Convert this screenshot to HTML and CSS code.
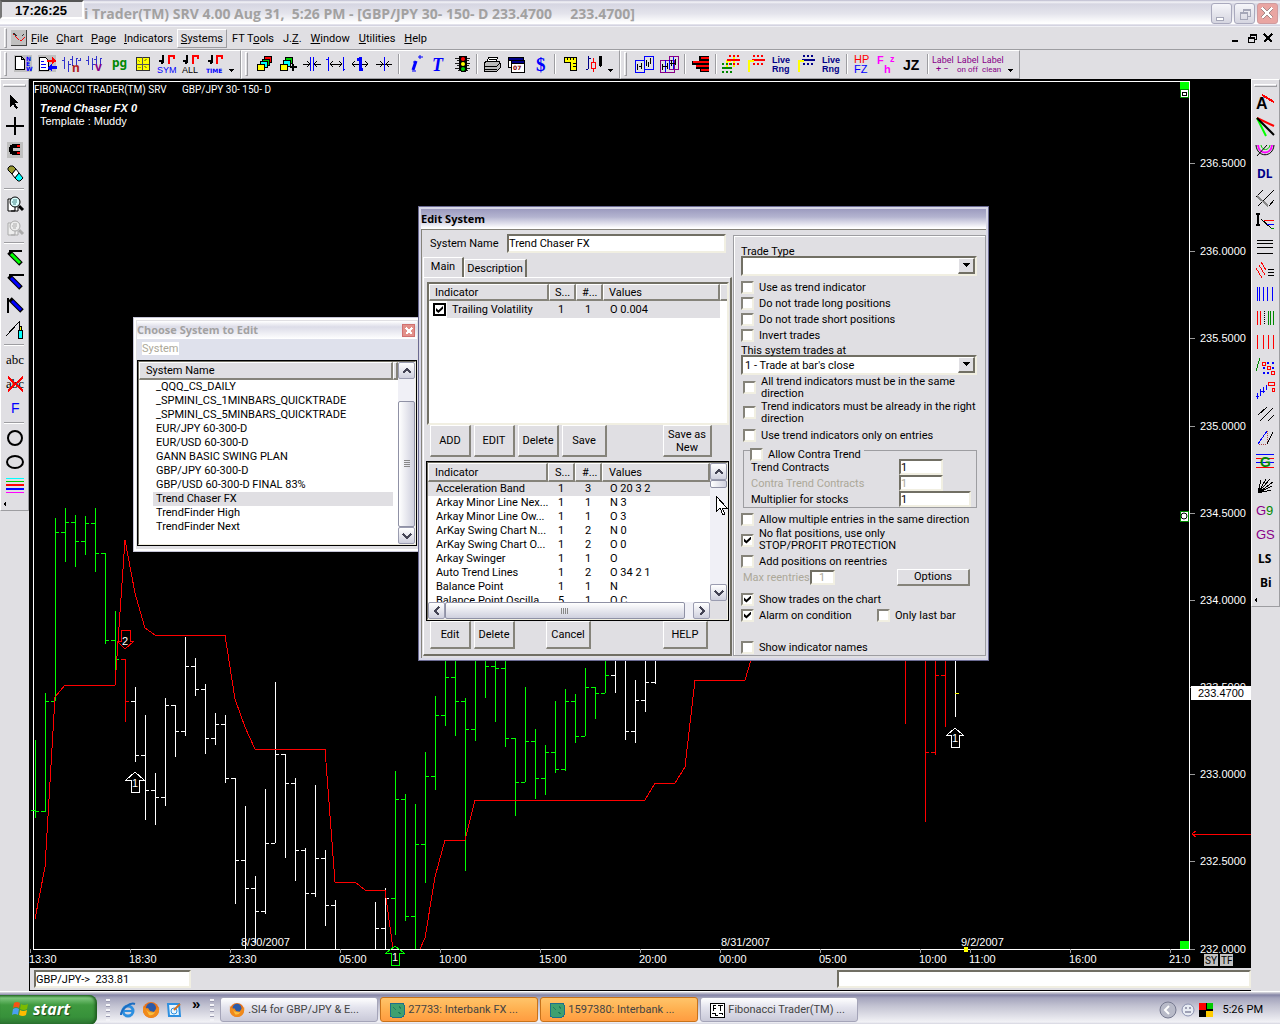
FILE: index.html
```html
<!DOCTYPE html>
<html lang="en">
<head>
<meta charset="utf-8">
<title>Fibonacci Trader(TM) SRV 4.00</title>
<link rel="stylesheet" href="styles.css">
</head>
<body>
<header class="titlebar">
  <h1 class="titlebar-text">i Trader(TM) SRV 4.00 Aug 31,  5:26 PM - [GBP/JPY 30- 150- D 233.4700     233.4700]</h1>
  <div class="clock">17:26:25</div>
  <div class="win-buttons">
    <button class="win-btn" aria-label="Minimize"><svg width="19" height="19"><path d="M4 13h7v3H4z" fill="#fff" stroke="#a5a7b8"/></svg></button>
    <button class="win-btn" aria-label="Restore"><svg width="19" height="19" fill="none" stroke="#a5a7b8"><path d="M8 8V5h7v7h-3M5 8h7v7H5zM5 9h7M8 6h7"/></svg></button>
    <button class="win-btn win-close" aria-label="Close"><svg width="19" height="19"><path d="M4 4l10 10M14 4L4 14" stroke="#a58a8a" stroke-width="4"/><path d="M4 4l10 10M14 4L4 14" stroke="#fff" stroke-width="2"/></svg></button>
  </div>
</header>

<nav class="menubar">
  <i class="grip"></i>
  <svg class="doc-icon" width="16" height="16"><path fill="#c0c0c0" d="M0 0h16v16H0z"/><path d="M0 15h15V0" fill="none" stroke="#444"/><path d="M2 4l3 3 3 3h3l3-3" fill="none" stroke="#f00" stroke-dasharray="2 1"/><path d="M2 3l4 3M11 6l2-2" stroke="#333"/></svg>
  <a href="#"><u>F</u>ile</a><a href="#"><u>C</u>hart</a><a href="#"><u>P</u>age</a><a href="#"><u>I</u>ndicators</a><a href="#" class="active"><u>S</u>ystems</a><a href="#">FT T<u>o</u>ols</a><a href="#">J.<u>Z</u>.</a><a href="#"><u>W</u>indow</a><a href="#"><u>U</u>tilities</a><a href="#"><u>H</u>elp</a>
  <div class="mdi-buttons">
    <button aria-label="Minimize chart"><svg width="10" height="10"><path d="M1 8h6" stroke="#000" stroke-width="2"/></svg></button>
    <button aria-label="Restore chart"><svg width="10" height="10" fill="none" stroke="#000"><path d="M3 4V1h6v5H7M1 4h6v5H1zM1 5h6M3 2h6"/></svg></button>
    <button aria-label="Close chart"><svg width="10" height="10"><path d="M1 1l8 8M9 1L1 9" stroke="#000" stroke-width="2"/></svg></button>
  </div>
</nav>

<div class="toolbars">
  <div class="toolbar">
    <i class="grip"></i>
    <button class="tool" aria-label="New"><svg width="24" height="24"><path fill="#c0c0c0" d="M3 3h18v17H3z"/><path d="M4 4h6l3 3v10H4zM10 4v3h3" fill="#fff" stroke="#000"/><g class="t6" fill="#00f"><text x="15" y="9">N</text><text x="15" y="14">E</text><text x="15" y="19">W</text></g></svg></button>
    <button class="tool" aria-label="Swap"><svg width="24" height="24"><path fill="#c0c0c0" d="M3 3h18v17H3z"/><path d="M4 5h6l3 3v10H4z" fill="#fff" stroke="#000"/><path d="M6 9h3M6 12h5M6 15h5" stroke="#00f"/><path d="M12 8h5V5l5 4-5 3v-2h-5z" fill="#f00"/><path d="M22 14h-5v-2l-5 4 5 3v-2h5z" fill="#00f"/></svg></button>
    <button class="tool" aria-label="Bars n"><svg width="24" height="24"><path d="M5 5v12M3 8h2M9 9v11M9 12h3M13 4v10M11 7h2M17 6v7M17 6h2M21 6v3M19 8h2" stroke="#33c" fill="none"/><text class="t12" x="13" y="20" fill="#b02020">n</text></svg></button>
    <button class="tool" aria-label="Bars v"><svg width="24" height="24"><path d="M5 4v9M3 8h2M9 6v12M9 12h3M13 4v10M11 7h2M17 6v7M17 6h2" stroke="#33c" fill="none"/><text class="t12" x="12" y="19" fill="#808">v</text></svg></button>
    <button class="tool" aria-label="Page"><svg width="24" height="24"><text class="t12" x="5" y="15" fill="#080">pg</text></svg></button>
    <button class="tool" aria-label="Grid"><svg width="24" height="24"><path d="M5 5h13v13H5z" fill="#ff0" stroke="#333"/><path d="M11 5v13M5 12h13" stroke="#555"/><path d="M7 8l2 2M13 9l3-2M7 15l3 1M13 14l3 2" stroke="#aa0"/></svg></button>
    <button class="tool" aria-label="Symbol"><svg width="24" height="24"><path d="M8 3v8M4 9h4M6 11h2" stroke="#000" stroke-width="2"/><path d="M14 12V4h5v3" stroke="#f00" stroke-width="2" fill="none"/><text class="t9" x="2" y="21" fill="#00f">SYM</text></svg></button>
    <button class="tool" aria-label="All"><svg width="24" height="24"><path d="M8 3v8M4 9h4M6 11h2" stroke="#000" stroke-width="2"/><path d="M14 12V4h5v3" stroke="#f00" stroke-width="2" fill="none"/><text class="t9" x="3" y="21">ALL</text></svg></button>
    <button class="tool" aria-label="Time"><svg width="24" height="24"><path d="M9 3v8M5 9h4M7 11h2" stroke="#000" stroke-width="2"/><path d="M14 12V4h5v3" stroke="#f00" stroke-width="2" fill="none"/><text class="t6" x="3" y="21" fill="#00f">TIME</text></svg></button>
    <button class="more" aria-label="More"><svg width="8" height="24"><path d="M1 17h6l-3 3z"/></svg></button>
  </div>
  <div class="toolbar">
    <i class="grip"></i>
    <button class="tool" aria-label="Cascade"><svg width="24" height="24" stroke="#000"><path fill="#f00" d="M12 4h7v6h-7z"/><path fill="#0c0" d="M10 7h7v6h-7z"/><path fill="#0ff" d="M8 9h7v6H8z"/><path fill="#ff0" d="M5 12h7v6H5z"/></svg></button>
    <button class="tool" aria-label="Add page"><svg width="24" height="24" stroke="#000"><path fill="#0c0" d="M9 5h7v6H9z"/><path fill="#0ff" d="M7 8h7v6H7z"/><path fill="#ff0" d="M4 12h7v6H4z"/><path d="M14 15h7M17 12v7" stroke-width="2"/></svg></button>
    <button class="tool" aria-label="Squeeze bars"><svg width="24" height="24" fill="none" stroke="#000"><path d="M3 12h7M7 9l3 3-3 3M21 12h-7M17 9l-3 3 3 3"/><path d="M10 5v14M13 5v14" stroke="#00f"/></svg></button>
    <button class="tool" aria-label="Widen bars"><svg width="24" height="24" fill="none" stroke="#000"><path d="M6 12h12M9 9l-3 3 3 3M15 9l3 3-3 3"/><path d="M4 5v14M2 7h2M19 5v14M19 17h2" stroke="#00f"/></svg></button>
    <button class="tool" aria-label="Widen spacing"><svg width="24" height="24" fill="none" stroke="#000"><path d="M4 12h16M7 9l-3 3 3 3M17 9l3 3-3 3"/><path d="M12 5v14M9 7h3M12 17h3" stroke="#00f" stroke-width="3"/></svg></button>
    <button class="tool" aria-label="Narrow spacing"><svg width="24" height="24" fill="none" stroke="#000"><path d="M4 12h16M8 9l3 3-3 3M17 9l-3 3 3 3"/><path d="M12 5v14" stroke="#00f"/></svg></button>
    <i class="sep"></i>
    <button class="tool" aria-label="Info"><svg class="smooth" width="24" height="24"><path d="M16 5h5M18 3v4" stroke="#00f"/><path d="M14 9l-3 9" fill="none" stroke="#00f" stroke-width="3"/><path d="M11 10h3M10 19h4" stroke="#00f"/></svg></button>
    <button class="tool" aria-label="Text"><svg width="24" height="24"><text class="serif-i" x="6" y="19" fill="#00f">T</text></svg></button>
    <button class="tool" aria-label="Traffic light"><svg width="24" height="24"><path d="M5 6h15M7 8h12M5 11h15M7 13h12M5 16h15M8 18h10" stroke="#222"/><path d="M9 4h8v14l-2 2h-4l-2-2z"/><g class="smooth"><circle cx="13" cy="7" r="2" fill="#f00"/><circle cx="13" cy="12" r="2" fill="#ff0"/><circle cx="13" cy="17" r="2" fill="#0c0"/></g></svg></button>
    <i class="sep"></i>
    <button class="tool" aria-label="Print"><svg width="24" height="24" stroke="#000"><path fill="#fff" d="M9 5h9l-3 6H6z"/><path fill="#bbb" d="M4 11l3-2h12l1 2v5l-3 3H4z"/><path d="M4 14h13l3-3M4 17h13M9 7h7M8 9h7" fill="none"/></svg></button>
    <button class="tool" aria-label="Calendar"><svg width="24" height="24" stroke="#000"><path fill="#fff" d="M4 6h15v9H4z"/><path fill="#008" d="M4 5h15v3H4z"/><path fill="#fff" d="M7 9h13v11H7z"/><path fill="#008" d="M7 8h13v3H7z"/><text class="t6" stroke="none" x="9" y="18" fill="#800">07</text></svg></button>
    <button class="tool" aria-label="Dollar"><svg width="24" height="24"><text class="dollar" x="8" y="19" fill="#00f">$</text></svg></button>
    <i class="sep"></i>
    <button class="tool" aria-label="Ruler"><svg width="24" height="24"><path d="M6 5h12v13h-6v-8H6z" fill="#ff0" stroke="#000"/><path d="M9 5v3M12 5v3M15 5v3M15 11h3M15 14h3" stroke="#000"/></svg></button>
    <button class="tool" aria-label="Candles"><svg width="24" height="24" fill="none"><path d="M6 4v13M4 17h2M6 6h3" stroke="#008"/><path d="M11 6v4M11 16v4M9 10h4v6H9z" stroke="#f00"/><path d="M17 4h3v9l-2 2-1-2z" fill="#000"/></svg></button>
    <button class="more" aria-label="More"><svg width="8" height="24"><path d="M1 17h6l-3 3z"/></svg></button>
  </div>
  <div class="toolbar wide">
    <i class="grip"></i>
    <button class="tool" aria-label="Overlay"><svg width="24" height="24" fill="none"><path d="M3 8h9v12H3zM12 4h9v13h-9z" stroke="#00f"/><path d="M5 12v6M7 14h2M9 11v6M14 8v6M16 10v5M18 6v6" stroke="#000"/></svg></button>
    <button class="tool" aria-label="Overlay pair"><svg width="24" height="24" fill="none"><path d="M3 8h14v12H3zM12 4h9v13h-9z" stroke="#808"/><path d="M8 8v12M12 8v9M16 5v12" stroke="#00f"/><path d="M5 12v6M10 11v6M14 8v6M18 7v6M5 14h5M13 11h6" stroke="#000"/></svg></button>
    <i class="sep"></i>
    <button class="tool" aria-label="Depth"><svg width="24" height="24"><path d="M11 4h10v16h-9v-3H8v-4H4V9h7z" fill="#000"/><path d="M13 6h8M5 10h16M8 14h13M13 18h8" stroke="#f00" stroke-width="2"/></svg></button>
    <i class="sep"></i>
    <button class="tool" aria-label="Range levels"><svg width="24" height="24" fill="none"><path d="M8 15V9h4M15 15V5" stroke="#ff0" stroke-width="2"/><path d="M10 4h10M10 12h10" stroke="#f00" stroke-width="2" stroke-dasharray="2 2"/><path d="M8 8h13" stroke="#f00" stroke-width="2"/><path d="M3 12h10M3 20h10" stroke="#080" stroke-width="2" stroke-dasharray="2 2"/><path d="M3 16h10" stroke="#080" stroke-width="2"/></svg></button>
    <button class="tool" aria-label="Red levels"><svg width="24" height="24"><path d="M9 4h10M9 12h10" stroke="#f00" stroke-width="2" stroke-dasharray="2 2"/><path d="M8 8h13" stroke="#f00" stroke-width="2"/><path d="M5 20V9h5" fill="none" stroke="#ff0" stroke-width="2"/></svg></button>
    <button class="tool" aria-label="Live range"><svg width="24" height="24" fill="#008"><text class="t9b" x="3" y="11">Live</text><text class="t9b" x="3" y="20">Rng</text></svg></button>
    <button class="tool" aria-label="Blue levels"><svg width="24" height="24"><path d="M9 4h10M9 12h10" stroke="#008" stroke-width="2" stroke-dasharray="2 2"/><path d="M8 8h13" stroke="#008" stroke-width="2"/><path d="M5 20V9h5" fill="none" stroke="#ff0" stroke-width="2"/></svg></button>
    <button class="tool" aria-label="Live range 2"><svg width="24" height="24" fill="#008"><text class="t9b" x="3" y="11">Live</text><text class="t9b" x="3" y="20">Rng</text></svg></button>
    <i class="sep"></i>
    <button class="tool" aria-label="HP FZ"><svg width="24" height="24" class="t11"><text x="4" y="11" fill="#f00">HP</text><text x="4" y="21" fill="#00f">FZ</text></svg></button>
    <button class="tool" aria-label="Fhz"><svg width="24" height="24" fill="#f0f"><text class="t11b" x="2" y="12">F</text><text class="t11b" x="9" y="21">h</text><text class="t9b" x="15" y="10">z</text></svg></button>
    <button class="tool" aria-label="JZ"><svg width="24" height="24"><text class="t14b" x="3" y="18">JZ</text></svg></button>
    <i class="sep"></i>
    <button class="tool" aria-label="Label add remove"><svg width="24" height="24" fill="#808" class="t8"><text x="1" y="11">Label</text><text x="5" y="20">+ −</text></svg></button>
    <button class="tool" aria-label="Label on off"><svg width="24" height="24" fill="#808" class="t8"><text x="1" y="11">Label</text><text class="t7" x="1" y="20">on off</text></svg></button>
    <button class="tool" aria-label="Label clean"><svg width="24" height="24" fill="#808" class="t8"><text x="1" y="11">Label</text><text class="t7" x="1" y="20">clean</text></svg></button>
    <button class="more" aria-label="More"><svg width="8" height="24"><path d="M1 17h6l-3 3z"/></svg></button>
  </div>
</div>

<main class="workspace">
  <aside class="rail">
    <div class="rail-box">
      <i class="hgrip"></i>
      <button class="rtool" aria-label="Pointer"><svg width="24" height="24"><path d="M9 5v12l3-3 3 5 2-1-3-5h4z"/></svg></button>
      <button class="rtool" aria-label="Crosshair"><svg width="24" height="24"><path d="M5 12h18M14 3v18" stroke="#000" stroke-width="2"/></svg></button>
      <button class="rtool" aria-label="Magnet"><svg width="24" height="24"><path fill="#c0c0c0" d="M6 4h16v16H6z"/><path d="M19 8h-6a3 3 0 0 0-3 3v1a3 3 0 0 0 3 3h6" fill="none" stroke="#000" stroke-width="4"/><path fill="#f00" d="M16 7h3v2h-3zM16 14h3v2h-3z"/></svg></button>
      <button class="rtool" aria-label="Eraser"><svg class="smooth" width="24" height="24" stroke="#000"><path fill="#993" d="M7 6l2-2h3l3 3-4 5-4-4z"/><path fill="#fff" d="M11 12l4-5 3 4-4 5z"/><path fill="#0ff" d="M14 16l4-5 4 5-3 3h-2z"/></svg></button>
      <i class="hsep"></i>
      <button class="rtool" aria-label="Zoom"><svg class="smooth" width="24" height="24"><path d="M7 7h7v12H7zM10 19h7v-4" fill="#fff" stroke="#000"/><circle cx="14" cy="10" r="5" fill="#dff" stroke="#000"/><path d="M12 8h4M11 10h5M12 12h3" stroke="#488"/><path d="M18 14l4 4" stroke="#000" stroke-width="3"/></svg></button>
      <button class="rtool" aria-label="Zoom out"><svg class="smooth" width="24" height="24"><path d="M7 7h7v12H7zM10 19h7v-4" fill="#eee" stroke="#aaa"/><circle cx="14" cy="10" r="5" fill="#eee" stroke="#aaa"/><path d="M12 8h4M11 10h5M12 12h3" stroke="#aaa"/><path d="M18 14l4 4" stroke="#aaa" stroke-width="3"/></svg></button>
      <i class="hsep"></i>
      <button class="rtool" aria-label="Green line"><svg class="smooth" width="24" height="24"><path d="M8 5h13" stroke="#000" stroke-width="2"/><path d="M8 6l12 12" stroke="#000" stroke-width="5"/><path d="M10 8l9 9" stroke="#0f0" stroke-width="3"/></svg></button>
      <button class="rtool" aria-label="Blue line"><svg class="smooth" width="24" height="24"><path d="M8 5h15" stroke="#000" stroke-width="2"/><path d="M8 6l12 12" stroke="#000" stroke-width="5"/><path d="M10 8l9 9" stroke="#00f" stroke-width="3"/></svg></button>
      <button class="rtool" aria-label="Vertical line"><svg class="smooth" width="24" height="24"><path d="M7 4v15" stroke="#000" stroke-width="2"/><path d="M9 5l12 12" stroke="#000" stroke-width="5"/><path d="M11 7l9 9" stroke="#00f" stroke-width="3"/></svg></button>
      <button class="rtool" aria-label="Marker"><svg width="24" height="24"><path d="M5 18L18 4v5" fill="none" stroke="#000"/><path d="M17 12h4v8h-4z" fill="#0ff" stroke="#000"/><path d="M18 8h2v4h-2z" fill="#ff0" stroke="#000"/></svg></button>
      <i class="hsep"></i>
      <button class="rtool" aria-label="Text"><svg width="24" height="24"><text class="abc" x="5" y="16">abc</text></svg></button>
      <button class="rtool" aria-label="Delete text"><svg width="24" height="24"><text class="abc" x="5" y="16">abc</text><path d="M7 5l15 14M22 5L7 19" stroke="#f00" stroke-width="2"/></svg></button>
      <button class="rtool" aria-label="F"><svg width="24" height="24"><text x="10" y="17" class="t14" fill="#00f">F</text></svg></button>
      <i class="hsep"></i>
      <button class="rtool" aria-label="Circle"><svg width="24" height="24" class="smooth"><circle cx="14" cy="12" r="7" fill="none" stroke="#000" stroke-width="2"/></svg></button>
      <button class="rtool" aria-label="Ellipse"><svg width="24" height="24" class="smooth"><ellipse cx="14" cy="12" rx="8" ry="6" fill="none" stroke="#000" stroke-width="2"/></svg></button>
      <button class="rtool" aria-label="Lines"><svg width="24" height="24"><path d="M5 4h18" stroke="#0ff"/><path d="M5 7h18" stroke="#0c0"/><path d="M5 11h18" stroke="#f00" stroke-width="2"/><path d="M5 15h18" stroke="#00f" stroke-width="2"/><path d="M5 18h18" stroke="#f0f"/></svg></button>
      <button class="rmore" aria-label="More tools"><svg width="8" height="10"><path d="M5 2v6L2 5z"/></svg></button>
    </div>
  </aside>

  <section class="document">
    <svg class="chart" viewBox="29 79 1222 889" preserveAspectRatio="xMinYMin meet" role="img" aria-label="GBP/JPY price chart">
      <g fill="none" stroke="#fff"><path d="M33 949V81H1189V949H33"/></g>
      <path id="bars-green" fill="none" stroke="#0f0"/>
      <path id="bars-white" fill="none" stroke="#fff"/>
      <path id="bars-red" fill="none" stroke="#f00"/>
      <path d="M955 693h4" stroke="#ff0"/>
      <path fill="none" stroke="#f00" d="M35 919L45 867 55 697 65 685H115L125 540 135 593 145 628 155 635H225L235 699 245 727 255 749H325L335 882H355L365 890H385L393 949M420 949L425 938 435 877 445 840H465L475 800H645L655 783H675L685 767 695 680H745L751 660"/>
      <g fill="none"><path stroke="#f00" d="M121 630h9v11h4l-9 8-8-8h4z"/><path stroke="#fff" d="M131 792v-12h-5l9-8 9 8h-5v12z"/><path stroke="#fff" d="M951 747v-12h-4l8-7 8 7h-4v12z"/><path stroke="#0f0" d="M391 965v-12h-5l9-7 9 7h-5v12z"/></g>
      <g class="label" text-anchor="middle"><text x="125" y="645">2</text><text x="135" y="787">1</text><text x="955" y="742">1</text><text x="395" y="961">1</text></g>
      <g class="label">
        <text class="caption" x="34" y="93">FIBONACCI TRADER(TM) SRV</text><text class="caption" x="182" y="93">GBP/JPY 30- 150- D</text>
        <text class="strong" x="40" y="112">Trend Chaser FX 0</text><text x="40" y="125">Template : Muddy</text>
        <text x="241" y="946">8/30/2007</text><text x="721" y="946">8/31/2007</text><text x="961" y="946">9/2/2007</text>
        <g id="time-axis"></g><g id="price-axis"></g>
      </g>
      <path d="M1191 686h60v14h-60z" fill="#fff"/><text class="label ink" x="1198" y="697">233.4700</text>
      <path d="M1192 834h59M1196 831l-4 3 4 3" stroke="#f00" fill="none"/>
      <path d="M1180 82h9v8h-9zM1180 941h9v8h-9z" fill="#0f0"/>
      <path d="M1180 89h8v8h-8zM1180 511h8v10h-8z" fill="#fff" stroke="#080"/>
      <path d="M1182 92h4v3h-4z" fill="none" stroke="#000"/><circle class="smooth" cx="1184" cy="516" r="3" fill="none" stroke="#000"/>
      <path d="M964 947h4v5h-4z" fill="#ff0"/>
      <path d="M1204 954h14v12h-14zM1220 954h13v12h-13z" fill="#c0c0c0"/><g class="label ink caption"><text x="1205" y="964">SY</text><text x="1221" y="964">TF</text></g>
    </svg>
    <footer class="status">
      <input class="field quote" aria-label="Quote" value="GBP/JPY-&gt;  233.81">
      <input class="field message" aria-label="Message">
    </footer>
  </section>

  <aside class="rail rail-right">
    <div class="rail-box">
      <i class="hgrip"></i>
      <button class="rtool" aria-label="Andrews"><svg width="24" height="24"><text class="t16" x="4" y="19">A</text><path d="M10 5l12 7" stroke="#f00" stroke-width="2"/></svg></button>
      <button class="rtool" aria-label="Fan"><svg class="smooth" width="24" height="24"><path d="M5 4l9 18" stroke="#0f0" stroke-width="2"/><path d="M5 4l17 8" stroke="#f00" stroke-width="2"/><path d="M5 4l17 17" stroke="#000" stroke-width="2"/></svg></button>
      <button class="rtool" aria-label="Arcs"><svg class="smooth" width="24" height="24" fill="none"><path d="M4 7c1 13 17 13 18 0" stroke="#000"/><path d="M6 7c1 10 13 10 14 0" stroke="#f0f" stroke-width="2"/><path d="M9 7c1 6 8 6 9 0" stroke="#0c0"/><path d="M5 18L15 7" stroke="#000"/></svg></button>
      <button class="rtool" aria-label="DL"><svg width="24" height="24"><text class="t12" x="5" y="16" fill="#008">DL</text></svg></button>
      <button class="rtool" aria-label="Pitchfork"><svg width="24" height="24"><path d="M11 4l-7 7M22 4L6 20M22 14l-5 6" stroke="#000"/><path d="M5 10l11 10" stroke="#888" stroke-width="2"/></svg></button>
      <button class="rtool" aria-label="Interval"><svg width="24" height="24"><path d="M4 4h4M6 4v11M4 15h4" stroke="#000" stroke-width="2"/><path d="M9 9l10 9" stroke="#000"/><path d="M12 10h10" stroke="#f00"/><path d="M15 14h7" stroke="#00f"/><path d="M19 18h3" stroke="#080"/></svg></button>
      <button class="rtool" aria-label="Horizontals"><svg width="24" height="24"><path d="M5 6h16M5 9h16M5 13h16M5 19h16" stroke="#000"/></svg></button>
      <button class="rtool" aria-label="Red slopes"><svg width="24" height="24"><path d="M4 10l6 10M7 7l6 10M9 4l5 8" stroke="#f00"/><path d="M16 11h6M16 14h6M16 17h6" stroke="#000"/></svg></button>
      <button class="rtool" aria-label="Blue verticals"><svg width="24" height="24"><path d="M5 5v14M7 5v14M11 5v14M15 5v14M20 5v14" stroke="#00f"/></svg></button>
      <button class="rtool" aria-label="Mixed verticals"><svg width="24" height="24"><path d="M5 5v14M8 5v14" stroke="#f00"/><path d="M12 5v14" stroke="#000" stroke-dasharray="1 1"/><path d="M16 5v14M18 5v14M21 5v14" stroke="#080"/></svg></button>
      <button class="rtool" aria-label="Red verticals"><svg width="24" height="24"><path d="M5 5v14M11 5v14M16 5v14M21 5v14" stroke="#f00"/></svg></button>
      <button class="rtool" aria-label="Squares"><svg width="24" height="24"><path d="M4 17L8 4" stroke="#080"/><path fill="#00f" d="M15 8h2v2h-2zM20 8h2v2h-2zM11 13h2v2h-2zM20 13h2v2h-2zM11 18h2v2h-2zM15 18h2v2h-2z"/><path d="M10 8h3v3h-3zM15 12h3v3h-3zM19 17h3v3h-3z" fill="none" stroke="#f00"/></svg></button>
      <button class="rtool" aria-label="Steps"><svg width="24" height="24" fill="none"><path d="M5 15v6M8 11v7M11 9v6M14 7v5M4 18h3M8 13h5" stroke="#00f"/><path d="M16 4h6v3h-6zM20 10h2v3h-2z" stroke="#f00"/></svg></button>
      <button class="rtool" aria-label="Parallels"><svg width="24" height="24"><path d="M6 13l9-8M8 19L21 6M16 19l6-6" stroke="#000"/></svg></button>
      <button class="rtool" aria-label="Triangle"><svg width="24" height="24"><path d="M6 18L15 5" stroke="#00f"/><path d="M15 5v13H6" fill="none" stroke="#a44" stroke-dasharray="1 1"/><path d="M15 18l6-12" stroke="#000"/></svg></button>
      <button class="rtool" aria-label="Gann levels"><svg width="24" height="24"><path d="M4 4h18M4 12h18" stroke="#00f"/><path d="M4 8h18M4 17h18" stroke="#f00"/><text class="t14b" x="8" y="17" fill="#080">G</text></svg></button>
      <button class="rtool" aria-label="Gann fan"><svg width="24" height="24"><path d="M6 19L9 6M6 19l8-14M6 19L18 5M6 19L21 8M6 19l14-7M6 19l13-3" stroke="#000"/></svg></button>
      <button class="rtool" aria-label="G9"><svg width="24" height="24" class="t13"><text x="4" y="17" fill="#808">G</text><text x="14" y="17" fill="#080">9</text></svg></button>
      <button class="rtool" aria-label="GS"><svg width="24" height="24" class="t13"><text x="4" y="17" fill="#808">GS</text></svg></button>
      <button class="rtool" aria-label="LS"><svg width="24" height="24"><text class="t12" x="6" y="17">LS</text></svg></button>
      <button class="rtool" aria-label="Bi"><svg width="24" height="24"><text class="t12" x="8" y="17">Bi</text></svg></button>
      <button class="rmore" aria-label="More tools"><svg width="8" height="10"><path d="M5 2v6L2 5z"/></svg></button>
    </div>
  </aside>
</main>

<section class="window chooser" aria-label="Choose System to Edit">
  <div class="window-title"><h2>Choose System to Edit</h2><button class="small-close" aria-label="Close"><svg width="12" height="12"><path d="M3 3l6 6M9 3L3 9" stroke="#fff" stroke-width="2"/></svg></button></div>
  <nav class="window-menu"><a href="#">System</a></nav>
  <div class="list chooser-list">
    <div class="list-body">
      <table>
        <colgroup><col class="c-system"><col></colgroup>
        <thead><tr><th>System Name</th><th></th></tr></thead>
        <tbody>
          <tr><td>_QQQ_CS_DAILY</td></tr><tr><td>_SPMINI_CS_1MINBARS_QUICKTRADE</td></tr><tr><td>_SPMINI_CS_5MINBARS_QUICKTRADE</td></tr><tr><td>EUR/JPY 60-300-D</td></tr><tr><td>EUR/USD 60-300-D</td></tr><tr><td>GANN BASIC SWING PLAN</td></tr><tr><td>GBP/JPY 60-300-D</td></tr><tr><td>GBP/USD 60-300-D FINAL 83%</td></tr><tr class="selected"><td>Trend Chaser FX</td></tr><tr><td>TrendFinder High</td></tr><tr><td>TrendFinder Next</td></tr>
        </tbody>
      </table>
    </div>
    <div class="vscroll"><button aria-label="Scroll up"><svg width="10" height="8"><path d="M1 6l4-4 4 4" fill="none" stroke="#445" stroke-width="2"/></svg></button><div class="track low"><i class="thumb"></i></div><button aria-label="Scroll down"><svg width="10" height="8"><path d="M1 2l4 4 4-4" fill="none" stroke="#445" stroke-width="2"/></svg></button></div>
  </div>
</section>

<section class="window editor" aria-label="Edit System">
  <div class="window-title"><h2>Edit System</h2></div>
  <div class="editor-body">
    <div class="editor-left">
      <div class="name-row"><label for="sysname">System Name</label><input id="sysname" class="field" value="Trend Chaser FX"></div>
      <div class="tabs"><button class="tab current">Main</button><button class="tab">Description</button></div>
      <div class="tab-panel">
        <div class="list used">
          <div class="list-body">
            <table>
              <colgroup><col class="c-ind"><col class="c-num"><col class="c-num"><col class="c-val"><col></colgroup>
              <thead><tr><th>Indicator</th><th class="n">S...</th><th class="n">#...</th><th>Values</th><th></th></tr></thead>
              <tbody><tr class="tall"><td class="check-cell"><label><input type="checkbox" class="heavy" checked><span>Trailing Volatility</span></label></td><td class="n hl">1</td><td class="n hl">1</td><td class="hl">O 0.004</td><td></td></tr></tbody>
            </table>
          </div>
        </div>
        <div class="actions top"><button>ADD</button><button>EDIT</button><button>Delete</button><button class="w45">Save</button><button class="w49 end">Save as<br>New</button></div>
        <div class="list library">
          <div class="list-col">
            <div class="list-body">
              <table>
                <colgroup><col class="c-ind"><col class="c-num"><col class="c-num"><col></colgroup>
                <thead><tr><th>Indicator</th><th class="n">S...</th><th class="n">#...</th><th>Values</th></tr></thead>
                <tbody>
                  <tr class="selected"><td>Acceleration Band</td><td class="n">1</td><td class="n">3</td><td>O 20 3 2</td></tr>
                  <tr><td>Arkay Minor Line Nex...</td><td class="n">1</td><td class="n">1</td><td>N 3</td></tr>
                  <tr><td>Arkay Minor Line Ow...</td><td class="n">1</td><td class="n">1</td><td>O 3</td></tr>
                  <tr><td>ArKay Swing Chart N...</td><td class="n">1</td><td class="n">2</td><td>N 0</td></tr>
                  <tr><td>ArKay Swing Chart O...</td><td class="n">1</td><td class="n">2</td><td>O 0</td></tr>
                  <tr><td>Arkay Swinger</td><td class="n">1</td><td class="n">1</td><td>O</td></tr>
                  <tr><td>Auto Trend Lines</td><td class="n">1</td><td class="n">2</td><td>O 34 2 1</td></tr>
                  <tr><td>Balance Point</td><td class="n">1</td><td class="n">1</td><td>N</td></tr>
                  <tr><td>Balance Point Oscilla...</td><td class="n">5</td><td class="n">1</td><td>O C</td></tr>
                </tbody>
              </table>
            </div>
            <div class="hscroll"><button aria-label="Scroll left"><svg width="8" height="10"><path d="M6 1L2 5l4 4" fill="none" stroke="#445" stroke-width="2"/></svg></button><div class="track"><i class="thumb"></i></div><button aria-label="Scroll right"><svg width="8" height="10"><path d="M2 1l4 4-4 4" fill="none" stroke="#445" stroke-width="2"/></svg></button></div>
          </div>
          <div class="vscroll corner"><button aria-label="Scroll up"><svg width="10" height="8"><path d="M1 6l4-4 4 4" fill="none" stroke="#445" stroke-width="2"/></svg></button><div class="track high"><i class="thumb"></i></div><button aria-label="Scroll down"><svg width="10" height="8"><path d="M1 2l4 4 4-4" fill="none" stroke="#445" stroke-width="2"/></svg></button></div>
        </div>
        <div class="actions bottom"><button>Edit</button><button>Delete</button><button class="w45 mid">Cancel</button><button class="w45 end">HELP</button></div>
      </div>
    </div>

    <div class="editor-right">
      <label class="caption-row" for="tradetype">Trade Type</label>
      <div class="combo"><select id="tradetype"><option></option></select><i class="drop"><svg width="8" height="5"><path d="M0 0h8L4 4z"/></svg></i></div>
      <div class="checks">
        <label><input type="checkbox"><span>Use as trend indicator</span></label>
        <label><input type="checkbox"><span>Do not trade long positions</span></label>
        <label><input type="checkbox"><span>Do not trade short positions</span></label>
        <label><input type="checkbox"><span>Invert trades</span></label>
      </div>
      <label class="caption-row" for="tradesat">This system trades at</label>
      <div class="combo"><select id="tradesat"><option>1 - Trade at bar's close</option></select><i class="drop"><svg width="8" height="5"><path d="M0 0h8L4 4z"/></svg></i></div>
      <div class="checks inset">
        <label class="two"><input type="checkbox"><span>All trend indicators must be in the same<br>direction</span></label>
        <label class="two"><input type="checkbox"><span>Trend indicators must be already in the right<br>direction</span></label>
        <label class="loose"><input type="checkbox"><span>Use trend indicators only on entries</span></label>
      </div>
      <fieldset>
        <legend><label><input type="checkbox"><span>Allow Contra Trend</span></label></legend>
        <div class="pair"><label for="tc">Trend Contracts</label><input id="tc" class="field" value="1"></div>
        <div class="pair off"><label for="ctc">Contra Trend Contracts</label><input id="ctc" class="field" value="1" disabled></div>
        <div class="pair long"><label for="mult">Multiplier for stocks</label><input id="mult" class="field" value="1"></div>
      </fieldset>
      <div class="checks">
        <label><input type="checkbox"><span>Allow multiple entries in the same direction</span></label>
        <label class="two"><input type="checkbox" checked><span>No flat positions, use only<br>STOP/PROFIT PROTECTION</span></label>
        <label><input type="checkbox"><span>Add positions on reentries</span></label>
      </div>
      <div class="reentries"><label for="maxre">Max reentries</label><input id="maxre" class="field" value="1" disabled><button>Options</button></div>
      <div class="checks last">
        <label><input type="checkbox" checked><span>Show trades on the chart</span></label>
        <div class="two-up"><label><input type="checkbox" checked><span>Alarm on condition</span></label><label><input type="checkbox"><span>Only last bar</span></label></div>
        <label class="apart"><input type="checkbox"><span>Show indicator names</span></label>
      </div>
    </div>
  </div>
  <svg class="cursor" width="14" height="22"><path d="M1 1v16l4-4 3 7 2-1-3-6h5z" fill="#fff" stroke="#000"/></svg>
</section>

<footer class="taskbar">
  <button class="start"><svg class="smooth" width="18" height="18"><path d="M2 3q3-2 6 0L7 8Q4 6 1 8z" fill="#f65314"/><path d="M9 4q3 2 7 0l-1 5q-3 2-7 0z" fill="#7cbb00"/><path d="M1 9q3-2 6 0l-1 6q-3-2-6 0z" fill="#4aa0f0"/><path d="M8 10q3 2 7 0l-1 5q-3 2-7 0z" fill="#ffbb00"/></svg><span>start</span></button>
  <i class="dots"></i>
  <div class="quick">
    <button aria-label="Internet Explorer"><svg class="smooth" width="18" height="18"><circle cx="9" cy="10" r="5" fill="none" stroke="#2d8fe0" stroke-width="3"/><path d="M5 10h9" stroke="#2d8fe0" stroke-width="2"/><path d="M2 14C2 8 11 1 16 3" fill="none" stroke="#1c6cc0" stroke-width="2"/></svg></button>
    <button aria-label="Firefox"><svg class="smooth" width="18" height="18"><circle cx="9" cy="9" r="8" fill="#e8731a"/><circle cx="9" cy="7" r="5" fill="#2c5aa8"/><path d="M1 4q1 4 5 3l2 3 4 1 3-4 2-1q1 7-4 10-8 3-12-5z" fill="#f08a1c"/><path d="M4 8q3 5 9 3-2 4-6 3z" fill="#f8c040"/></svg></button>
    <button aria-label="Outlook"><svg class="smooth" width="18" height="18"><path d="M3 3h11l1 12H4z" fill="#e8f6ff" stroke="#2d8fe0" stroke-width="2"/><circle cx="9" cy="10" r="3" fill="none" stroke="#2d8fe0"/><path d="M9 9l6-6" stroke="#d07020" stroke-width="2"/></svg></button>
  </div>
  <span class="chevrons">»</span>
  <i class="dots"></i>
  <div class="tasks">
    <button class="task"><svg class="smooth" width="16" height="16" viewBox="0 0 18 18"><circle cx="9" cy="9" r="8" fill="#e8731a"/><circle cx="9" cy="7" r="5" fill="#2c5aa8"/><path d="M1 4q1 4 5 3l2 3 4 1 3-4 2-1q1 7-4 10-8 3-12-5z" fill="#f08a1c"/><path d="M4 8q3 5 9 3-2 4-6 3z" fill="#f8c040"/></svg><span>.SI4 for GBP/JPY &amp; E...</span></button>
    <button class="task alert"><svg width="16" height="16"><rect x="1" y="1" width="14" height="14" rx="2" fill="#3fa06f" stroke="#1c6f8c"/><path d="M4 5l3 3M9 10l3 2M10 4l2 3" stroke="#1f7f5a"/></svg><span>27733: Interbank FX ...</span></button>
    <button class="task alert"><svg width="16" height="16"><rect x="1" y="1" width="14" height="14" rx="2" fill="#3fa06f" stroke="#1c6f8c"/><path d="M4 5l3 3M9 10l3 2M10 4l2 3" stroke="#1f7f5a"/></svg><span>1597380: Interbank ...</span></button>
    <button class="task"><svg width="16" height="16"><path fill="#fff" stroke="#000" d="M1 1h14v14H1z"/><path d="M4 3v6M4 3h3M4 6h3M9 3h5M11 3v6M3 11h3v2h3M10 11h3v2" stroke="#000" fill="none"/></svg><span>Fibonacci Trader(TM) ...</span></button>
  </div>
  <div class="tray">
    <button aria-label="Show hidden icons"><svg class="smooth" width="18" height="18"><circle cx="9" cy="9" r="8" fill="#b8bac8" stroke="#777a90"/><path d="M10 5L6 9l4 4" fill="none" stroke="#fff" stroke-width="2"/></svg></button>
    <svg class="smooth" width="14" height="14"><circle cx="7" cy="7" r="6" fill="#e8ecf4" stroke="#8a90b0"/><path d="M4 5h2M8 5h2M4 9h6" stroke="#557"/></svg>
    <svg width="14" height="14"><path fill="#000" d="M0 0h14v14H0z"/><path fill="#f00" d="M0 0h7v7H0z"/><path fill="#0c0" d="M8 0h6v6H8z"/><path fill="#fc0" d="M7 8h7v6H7z"/></svg>
    <span>5:26 PM</span>
  </div>
</footer>
<script src="chart.js"></script>
</body>
</html>
```
FILE: styles.css
```css
* { box-sizing: border-box; }
:root { --face: #e0dfe3; --shadow: #9d9da1; --dark: #716f64; }
body { margin: 0; min-height: 100vh; display: flex; flex-direction: column; position: relative; overflow: hidden; background: var(--face); color: #000; font: 11px/13px Roboto, "Liberation Sans", sans-serif; }
button, input, select { font: inherit; color: inherit; margin: 0; padding: 0; border: 0; border-radius: 0; background: none; }
a { color: inherit; text-decoration: none; }
h1, h2 { margin: 0; }
svg { display: block; flex: none; shape-rendering: crispEdges; }
.smooth { shape-rendering: auto; }

.titlebar { height: 27px; display: flex; align-items: center; justify-content: space-between; padding: 0 2px 0 84px; position: relative; background: linear-gradient(#b8b7cc 0, #f4f4f8 2px, #d6d6e2 4px, #e4e4ec 50%, #fff 23px, #fff 24px, #c6c5d7 25px, #fff 27px); }
.titlebar-text { font: bold 14px/16px "Open Sans", "Noto Sans", sans-serif; color: #a2a1a1; white-space: pre; }
.clock { position: absolute; left: 0; top: 0; width: 84px; height: 19px; padding-left: 13px; border: 2px solid #fff; border-top-color: #555; border-left-color: #777; background: #e4e3e8; font: bold 13px/17px "Liberation Sans", sans-serif; }
.win-buttons { display: flex; gap: 2px; }
.win-btn { width: 21px; height: 21px; border: 1px solid #a9a9bd; border-radius: 3px; background: linear-gradient(#f6f6fa, #d5d5e0); }
.win-close { background: #e9a5a2; border-color: #d09a9e; }

.menubar { height: 23px; display: flex; align-items: center; padding: 0 4px; border-bottom: 1px solid var(--shadow); }
.grip { width: 3px; height: 20px; border: 1px solid var(--shadow); border-left-color: #fff; border-top-color: #fff; flex: none; }
.doc-icon { margin: 0 0 0 4px; }
.menubar a { padding: 2px 3px; border: 1px solid transparent; }
.menubar a.active { border-color: #fff #9d9da1 #9d9da1 #fff; }
.menubar a.active ~ a { padding-left: 4px; }
.mdi-buttons { margin-left: auto; display: flex; gap: 6px; padding-right: 3px; }

.toolbars { height: 29px; display: flex; }
.toolbar { display: flex; align-items: center; border: 1px solid #fff; border-right-color: var(--shadow); border-bottom-color: var(--shadow); padding: 0 0 2px 3px; }
.toolbar .grip { margin-right: 4px; height: 24px; }
.wide .grip { margin-right: 5px; }
.tool { width: 24px; height: 24px; }
.wide .tool { width: 25px; }
.more { width: 12px; margin-right: 1px; }
.sep { width: 2px; height: 20px; margin: 0 2px; border-left: 1px solid var(--shadow); border-right: 1px solid #fff; }
.t6 { font: bold 6px "DejaVu Sans", sans-serif; }
.t7 { font: 8px Roboto, sans-serif; }
.t8 { font: 9px Roboto, sans-serif; }
.t9 { font: 9px "Liberation Sans", sans-serif; }
.t9b { font: bold 9px "Liberation Sans", sans-serif; }
.t11 { font: 11px "Liberation Sans", sans-serif; }
.t11b { font: bold 11px "Liberation Sans", sans-serif; }
.t12 { font: bold 12px "Noto Sans", sans-serif; }
.t13 { font: 13px "Liberation Sans", sans-serif; }
.t14 { font: 14px "Liberation Sans", sans-serif; }
.t14b { font: bold 14px "Liberation Sans", sans-serif; }
.t16 { font: bold 16px "Liberation Sans", sans-serif; }
.serif-i { font: italic bold 18px "Liberation Serif", serif; }
.dollar { font: bold 19px "Liberation Serif", serif; }
.abc { font: 13px "Liberation Serif", serif; }

.workspace { flex: 1; display: flex; min-height: 0; }
.rail { width: 29px; flex: none; }
.rail-box { border: 1px solid #fff; border-right-color: var(--shadow); border-bottom-color: var(--shadow); display: flex; flex-direction: column; align-items: flex-start; }
.hgrip { width: 23px; height: 3px; margin: 4px 2px 3px; border: 1px solid var(--shadow); border-left-color: #fff; border-top-color: #fff; }
.rtool { height: 24px; }
.hsep { width: 20px; height: 2px; margin: 2px 3px; border-top: 1px solid var(--shadow); border-bottom: 1px solid #fff; }
.rmore { height: 12px; }

.document { flex: 1; min-width: 0; display: flex; flex-direction: column; background: #000; border-bottom: 1px solid #000; }
.chart { width: 100%; flex: 1; min-height: 0; }
.label { font: 11px "Liberation Sans", sans-serif; fill: #fff; }
.ink { fill: #000; }
.label .caption, .label.caption { font: 10px Roboto, sans-serif; }
.label .strong { font: italic bold 11px "Liberation Sans", sans-serif; }
.status { height: 22px; margin-left: 1px; padding: 2px 0 2px 4px; display: flex; justify-content: space-between; background: var(--face); }
.field { background: #fff; border: 2px solid #f1efe2; border-top-color: var(--dark); border-left-color: var(--dark); outline: 0; min-width: 0; }
.quote { width: 157px; white-space: pre; }
.message { width: 34%; }

.window { position: absolute; display: flex; flex-direction: column; background: var(--face); }
.window-title { display: flex; align-items: center; justify-content: space-between; }
.window-title h2 { font: bold 11px/14px "Open Sans", "Noto Sans", sans-serif; }
table { border-collapse: separate; border-spacing: 0; table-layout: fixed; width: 100%; }
th { height: 17px; padding: 0 0 0 5px; text-align: left; font-weight: normal; background: var(--face); border: 1px solid #fff; border-right: 2px solid #85837a; border-bottom: 2px solid #85837a; line-height: 13px; overflow: hidden; white-space: nowrap; }
td { height: 14px; padding: 0 0 0 7px; line-height: 14px; white-space: nowrap; overflow: hidden; }
th.n { padding-left: 5px; }
td.n { padding-left: 9px; }
.selected td, td.hl { background: var(--face); }
.list { display: flex; background: #fff; border: 2px solid; border-color: var(--dark) #f1efe2 #f1efe2 var(--dark); }
.list-body { flex: 1; min-width: 0; overflow: hidden; }

.chooser { left: 133px; top: 317px; width: 288px; height: 235px; border: 1px solid #c6c5d7; box-shadow: inset 0 0 0 2px #fff; padding: 3px; }
.chooser .window-title { height: 18px; background: linear-gradient(#fff, #dcdce8 6px, #fff); }
.chooser h2 { color: #a2a1a1; }
.small-close { width: 13px; height: 13px; margin-right: 2px; background: #e2908a; border: 1px solid #d07070; display: grid; place-items: center; }
.window-menu { height: 21px; padding: 3px 5px; background: #dfe1ec; color: #aca899; }
.window-menu a { background: #fff; }
.chooser-list { flex: 1; margin-bottom: 2px; outline: 1px solid #000; outline-offset: -1px; }
.chooser th { height: 18px; padding-left: 6px; }
.chooser td { padding-left: 17px; }
.c-system { width: 254px; }
.chooser .selected td { background: linear-gradient(90deg, #fff 14px, var(--face) 14px); }
.vscroll { width: 17px; flex: none; display: flex; flex-direction: column; background: #f0f0f6; }
.vscroll button, .hscroll button { width: 17px; height: 17px; flex: none; display: grid; place-items: center; border: 1px solid #9a9cb0; border-radius: 2px; background: linear-gradient(#fff, #cfd0de); }
.track { flex: 1; display: flex; }
.thumb { flex: 1; border: 1px solid #8f91a5; border-radius: 2px; background: linear-gradient(90deg, #fff, #cfd0de); }
.track.low { padding-top: 22px; }
.track.low .thumb { background: repeating-linear-gradient(#888 0 1px, transparent 1px 2px) center / 6px 8px no-repeat, linear-gradient(90deg, #fff, #cfd0de); }
.track.high .thumb { height: 8px; }
.hscroll { height: 17px; display: flex; background: #f0f0f6; }
.hscroll .track { padding-right: 8px; }
.hscroll .thumb { background: repeating-linear-gradient(90deg, #888 0 1px, transparent 1px 2px) center / 8px 6px no-repeat, linear-gradient(#fff, #cfd0de); }

.editor { left: 418px; top: 206px; width: 571px; height: 455px; border: 1px solid #6a6a92; box-shadow: inset 0 0 0 2px #d8d8e8; padding: 2px; }
.editor .window-title { height: 20px; background: linear-gradient(#9c9bbf, #b4b4d0 8px, #fff 19px); }
.editor-body { flex: 1; display: flex; gap: 1px; padding: 0 0 2px 1px; border-top: 1px solid #85837a; border-left: 1px solid #85837a; }
.editor-left { width: 309px; flex: none; display: flex; flex-direction: column; }
.name-row { display: flex; align-items: center; height: 19px; margin: 4px 6px 4px 7px; }
.name-row label { width: 77px; }
.name-row input { flex: 1; height: 19px; }
.tabs { display: flex; align-items: flex-end; height: 20px; }
.tab { height: 18px; width: 63px; border: 1px solid #fff; border-right: 2px solid var(--dark); border-bottom: 0; }
.tab.current { width: 41px; height: 20px; padding-bottom: 2px; }
.tab-panel { flex: 1; display: flex; flex-direction: column; padding: 4px 1px 0 4px; border: 1px solid #fff; border-right: 2px solid var(--dark); border-bottom: 2px solid var(--dark); }
.used { height: 143px; margin-left: -1px; }
.c-ind { width: 120px; }
.c-num { width: 27px; }
.c-val { width: 117px; }
.used th:last-child { border-right: 0; padding: 0; }
.tall td { height: 17px; }
.check-cell { padding: 0 0 0 4px; }
.check-cell label { display: flex; align-items: center; }
.check-cell span { flex: 1; background: var(--face); margin-left: 1px; padding-left: 5px; line-height: 17px; }
.actions { display: flex; gap: 3px; padding: 0 22px 0 2px; }
.actions button { width: 41px; height: 32px; border: 1px solid #fff; border-right: 2px solid #85837a; border-bottom: 2px solid #85837a; line-height: 13px; }
.actions .w45 { width: 45px; }
.actions .w49 { width: 49px; }
.actions .end { margin-left: auto; }
.actions.top { padding-right: 17px; }
.actions.bottom { padding-right: 21px; }
.actions.bottom button { height: 28px; }
.actions .mid { margin-left: 28px; }
.library { height: 160px; margin: 4px 0 0 -2px; outline: 1px solid #000; outline-offset: -1px; }
.list-col { flex: 1; min-width: 0; display: flex; flex-direction: column; background: var(--face); }
.list-col .list-body { min-height: 0; background: #fff; }
.library th { height: 19px; padding-left: 6px; }
.library td { padding-left: 8px; }
.library td.n { padding-left: 10px; }
.corner { padding-bottom: 18px; background: var(--face); }
.corner .track { background: #f0f0f6; }

.editor-right { flex: 1; margin: 5px 0 0; padding: 8px 8px 0 7px; border: 1px solid var(--shadow); box-shadow: inset 1px 1px #fff; }
.caption-row { display: block; height: 12px; line-height: 15px; }
.combo { display: grid; height: 20px; grid-template-columns: 1fr 17px; border: 2px solid; border-color: var(--dark) #f1efe2 #f1efe2 var(--dark); background: #fff; }
.combo select { grid-area: 1 / 1 / 2 / 3; appearance: none; padding-left: 2px; outline: 0; }
.drop { grid-area: 1 / 2; display: grid; place-items: center; background: var(--face); border: 1px solid #fff; border-right: 2px solid var(--dark); border-bottom: 2px solid var(--dark); pointer-events: none; }
.checks { display: flex; flex-direction: column; padding-top: 3px; }
.checks label { display: flex; align-items: center; gap: 5px; height: 16px; white-space: nowrap; }
.checks .two { height: 26px; line-height: 12px; }
.checks.inset { padding: 0 0 0 2px; }
.inset .two { height: 25px; }
.checks .loose { height: 20px; }
input[type="checkbox"] { appearance: none; flex: none; width: 13px; height: 13px; display: grid; place-items: center; background: #fff; border: 2px solid; border-color: #85837a #f1efe2 #f1efe2 #85837a; }
input[type="checkbox"]:checked::before { content: ""; width: 7px; height: 7px; background: #000; clip-path: polygon(0 30%, 35% 60%, 100% 0, 100% 40%, 35% 100%, 0 70%); }
input[type="checkbox"].heavy { border-color: #000; }
fieldset { margin: 1px 0 0 2px; padding: 5px 5px 0 7px; height: 62px; min-width: 0; border: 1px solid var(--shadow); }
legend { height: 8px; padding: 0 3px 0 0; margin-left: -1px; }
legend label { display: flex; align-items: center; gap: 5px; padding-top: 2px; }
.pair { display: flex; align-items: center; height: 16px; }
.pair label { flex: 1; }
.pair .field { width: 44px; height: 16px; margin-right: 28px; }
.pair.long .field { width: 72px; margin-right: 0; }
.off, .reentries label, .field:disabled { color: #aca899; }
.reentries { display: flex; align-items: center; height: 16px; padding-left: 2px; }
.reentries .field { width: 25px; height: 15px; text-align: center; }
.reentries button { width: 73px; height: 17px; margin: 0 7px 0 auto; border: 1px solid #fff; border-right: 2px solid #85837a; border-bottom: 2px solid #85837a; }
.checks.last { padding-top: 6px; }
.two-up { display: grid; grid-template-columns: 136px 1fr; }
.checks .apart { margin-top: 16px; }
.cursor { position: absolute; left: 296px; top: 288px; }

.taskbar { height: 34px; display: flex; align-items: center; border-top: 1px solid #fff; padding-top: 2px; background: linear-gradient(#e0dfe3 0, #8585a6 3px, #a5a5bd 6px, #c3c3d2 14px, #f2f2f6 30px, #b8b8c8 34px); }
.start { width: 97px; height: 30px; display: flex; align-items: center; gap: 3px; padding: 0 0 2px 12px; border-radius: 0 8px 8px 0; background: linear-gradient(#2d7a2d, #7cc57c 3px, #3f9a3f 10px, #37913a 22px, #2a7030); box-shadow: inset -2px 0 3px #1d5a1d; color: #fff; font: italic bold 16px/20px "Open Sans", sans-serif; text-shadow: 1px 1px 1px #1d4a1d; }
.dots { width: 4px; height: 22px; margin: 0 9px; background: repeating-linear-gradient(#f4f4f8 0 2px, #9a9ab0 2px 3px, transparent 3px 5px); }
.quick { display: flex; gap: 5px; }
.chevrons { font: bold 15px/16px "Liberation Sans", sans-serif; margin: 0 1px 12px 9px; }
.dots + .tasks { margin-left: -3px; }
.tasks { display: flex; gap: 2px; flex: 1; }
.task { width: 158px; height: 25px; display: flex; align-items: center; gap: 3px; padding-left: 8px; border: 1px solid #a4a4b8; border-radius: 3px; background: linear-gradient(#fff, #e4e4ee 40%, #c9c9d8); color: #444; white-space: nowrap; }
.task.alert { border-color: #c8721a; background: linear-gradient(#ffc46a, #ffb050 50%, #ff9c40); }
.tray { display: flex; align-items: center; gap: 4px; padding-right: 17px; }
.tray span { margin-left: 6px; }
```
FILE: chart.js
```js
// Each bar is [high, low, close]; bars are ten pixels apart and open at the previous close.
const runs = [
  { color: 'green', x: 35, open: 810, bars: [[740,818,811],[693,812,701],[518,701,532],[508,562,522],[515,567,541],[516,555,523],[508,572,553],[553,644,640],[611,673,659]] },
  { color: 'red', x: 125, open: 659, bars: [[659,722,701]] },
  { color: 'white', x: 135, open: 701, bars: [[687,762,755],[715,820,790],[773,825,797],[698,806,705],[705,757,731],[637,736,666],[658,696,689],[684,754,738],[713,745,724],[715,783,778],[778,904,860],[806,949,888],[876,943,911],[789,914,843],[682,843,754],[754,858,783],[778,881,850],[848,949,893],[785,897,858],[850,926,905],[900,949]] },
  { color: 'white', x: 375, bars: [[902,949,928],[888,949,898]] },
  { color: 'green', x: 395, open: 898, bars: [[771,935,799],[794,921,916],[804,949,844],[752,883,776],[696,790,715],[655,726,677],[655,736,701],[698,871,729],[655,741],[655,698,666],[655,722,668],[655,747,738],[738,816,782],[687,782,741],[729,799,778],[745,795,752],[701,773,769],[689,771,701],[694,743,736],[668,736,687],[687,719,693],[655,693,675]] },
  { color: 'white', x: 615, open: 675, bars: [[655,693],[655,740,731],[680,743,700],[655,712,682],[655,684]] },
  { color: 'red', x: 905, bars: [[655,724]] },
  { color: 'red', x: 925, bars: [[655,822,752],[655,755,675],[655,727]] },
  { color: 'white', x: 955, bars: [[655,717]] }
];
const paths = { green: '', white: '', red: '' };
for (const run of runs) {
  let open = run.open;
  run.bars.forEach(([high, low, close], i) => {
    const x = run.x + i * 10;
    let d = `M${x} ${high}V${low}`;
    if (open) d += `M${x - 4} ${open}h4`;
    if (close) d += `M${x} ${close}h4`;
    paths[run.color] += d;
    open = close;
  });
}
for (const color in paths) document.getElementById('bars-' + color).setAttribute('d', paths[color]);

const times = [[30,'13:30'],[130,'18:30'],[230,'23:30'],[340,'05:00'],[440,'10:00'],[540,'15:00'],[640,'20:00'],[720,'00:00'],[820,'05:00'],[920,'10:00'],[970,'11:00'],[1070,'16:00'],[1170,'21:0']];
document.getElementById('time-axis').innerHTML = times.map(([x, t]) =>
  `<path d="M${x} 949v4" stroke="#999"/><text x="${x - 1}" y="963">${t}</text>`).join('');

const prices = [[163,'236.5000'],[251,'236.0000'],[338,'235.5000'],[426,'235.0000'],[513,'234.5000'],[600,'234.0000'],[687,'233.5000'],[774,'233.0000'],[861,'232.5000'],[949,'232.0000']];
document.getElementById('price-axis').innerHTML = prices.map(([y, p]) =>
  `<path d="M1190 ${y}h5" stroke="#999"/><text x="1200" y="${y + 4}">${p}</text>`).join('');
```
